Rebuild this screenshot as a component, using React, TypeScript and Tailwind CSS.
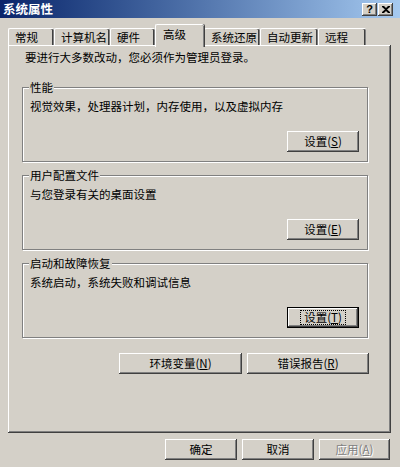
import React from "react";

const raised =
  "shadow-[inset_-1px_-1px_#404040,inset_1px_1px_#ffffff,inset_-2px_-2px_#808080,inset_2px_2px_#d4d0c8]";

function Btn({
  w,
  children,
  focused,
  disabled,
}: {
  w: string;
  children: React.ReactNode;
  focused?: boolean;
  disabled?: boolean;
}) {
  if (focused) {
    return (
      <div className={`${w} h-[21px] border border-black bg-[#d4d0c8] flex`}>
        <div className={`flex-1 flex items-center justify-center ${raised}`}>
          <span className="outline outline-1 outline-dotted outline-black px-[3px] leading-[13px]">
            {children}
          </span>
        </div>
      </div>
    );
  }
  return (
    <div
      className={`${w} h-[21px] bg-[#d4d0c8] flex items-center justify-center ${raised} ${
        disabled ? "text-[#808080] [text-shadow:1px_1px_#ffffff]" : ""
      }`}
    >
      {children}
    </div>
  );
}

function Group({
  title,
  desc,
  btn,
  first,
}: {
  title: string;
  desc: string;
  btn: React.ReactNode;
  first?: boolean;
}) {
  return (
    <div
      className={`relative w-[346px] h-[75px] border border-[#808080] shadow-[inset_1px_1px_#ffffff,1px_1px_#ffffff] flex flex-col pt-[11px] pl-[7px] ${
        first ? "mt-[23px]" : "mt-[13px]"
      }`}
    >
      <span className="absolute -top-[8px] left-[6px] px-[1px] bg-[#d4d0c8] leading-[14px]">
        {title}
      </span>
      <div className="leading-[14px]">{desc}</div>
      <div className="mt-[18px] self-end mr-[8px]">{btn}</div>
    </div>
  );
}

const tabs = [
  { label: "常规", w: "w-[46px]" },
  { label: "计算机名", w: "w-[56px]" },
  { label: "硬件", w: "w-[45px]" },
  { label: "高级", w: "w-[49px]", sel: true },
  { label: "系统还原", w: "w-[56px]" },
  { label: "自动更新", w: "w-[58px]" },
  { label: "远程", w: "w-[48px]" },
];

export default function App() {
  return (
    <div className="w-[400px] h-[467px] bg-[#d4d0c8] overflow-hidden flex flex-col text-black text-[11.5px] font-['Noto_Sans_CJK_SC',sans-serif]">
      {/* Title bar */}
      <div className="h-[18px] bg-gradient-to-r from-[#0a246a] to-[#a6caf0] flex items-center justify-between pl-[3px] pr-[7px]">
        <span className="text-white font-bold text-[12.5px] leading-[18px]">系统属性</span>
        <div className="flex gap-[1px]">
          <div className={`w-[15px] h-[13px] bg-[#d4d0c8] flex items-center justify-center ${raised}`}>
            <span className="font-['Liberation_Sans',sans-serif] font-bold text-[11px] leading-[11px]">?</span>
          </div>
          <div className={`w-[15px] h-[13px] bg-[#d4d0c8] flex items-center justify-center ${raised}`}>
            <svg width="8" height="7" viewBox="0 0 8 7">
              <path d="M0 0h2l2 2 2-2h2v1L5 3.5 8 6v1H6L4 5 2 7H0V6l3-2.5L0 1z" fill="#000" />
            </svg>
          </div>
        </div>
      </div>

      {/* Tabs */}
      <div className="mt-[6px] pl-[8px] flex items-end h-[21px]">
        {tabs.map((t) =>
          t.sel ? (
            <div
              key={t.label}
              className={`${t.w} h-[23px] -mb-[2px] relative z-10 bg-[#d4d0c8] border-l border-t border-white rounded-t-[2px] shadow-[inset_-1px_0_#808080,1px_0_#404040] pl-[7px] pt-[2px] leading-[14px]`}
            >
              {t.label}
            </div>
          ) : (
            <div
              key={t.label}
              className={`${t.w} h-[17px] border-l border-t border-white rounded-t-[2px] shadow-[inset_-1px_0_#808080,inset_-2px_0_#404040] pl-[6px] pt-[1px] leading-[14px]`}
            >
              {t.label}
            </div>
          )
        )}
      </div>

      {/* Panel */}
      <div className="ml-[8px] w-[383px] h-[388px] shadow-[inset_-1px_-1px_#404040,inset_1px_1px_#ffffff,inset_-2px_-2px_#808080,inset_2px_2px_#d4d0c8] flex flex-col pt-[5px] pl-[14px]">
        <div className="pl-[3px] leading-[14px]">要进行大多数改动，您必须作为管理员登录。</div>
        <Group
          first
          title="性能"
          desc="视觉效果，处理器计划，内存使用，以及虚拟内存"
          btn={<Btn w="w-[72px]">设置(<u>S</u>)</Btn>}
        />
        <Group
          title="用户配置文件"
          desc="与您登录有关的桌面设置"
          btn={<Btn w="w-[72px]">设置(<u>E</u>)</Btn>}
        />
        <Group
          title="启动和故障恢复"
          desc="系统启动，系统失败和调试信息"
          btn={
            <Btn w="w-[72px]" focused>
              设置(<u>T</u>)
            </Btn>
          }
        />
        <div className="w-[347px] mt-[15px] flex justify-end gap-[5px]">
          <Btn w="w-[123px]">环境变量(<u>N</u>)</Btn>
          <Btn w="w-[122px]">错误报告(<u>R</u>)</Btn>
        </div>
      </div>

      {/* Bottom buttons */}
      <div className="mt-[6px] pr-[10px] flex justify-end gap-[5px]">
        <Btn w="w-[72px]">确定</Btn>
        <Btn w="w-[72px]">取消</Btn>
        <Btn w="w-[71px]" disabled>
          应用(<u>A</u>)
        </Btn>
      </div>
    </div>
  );
}
